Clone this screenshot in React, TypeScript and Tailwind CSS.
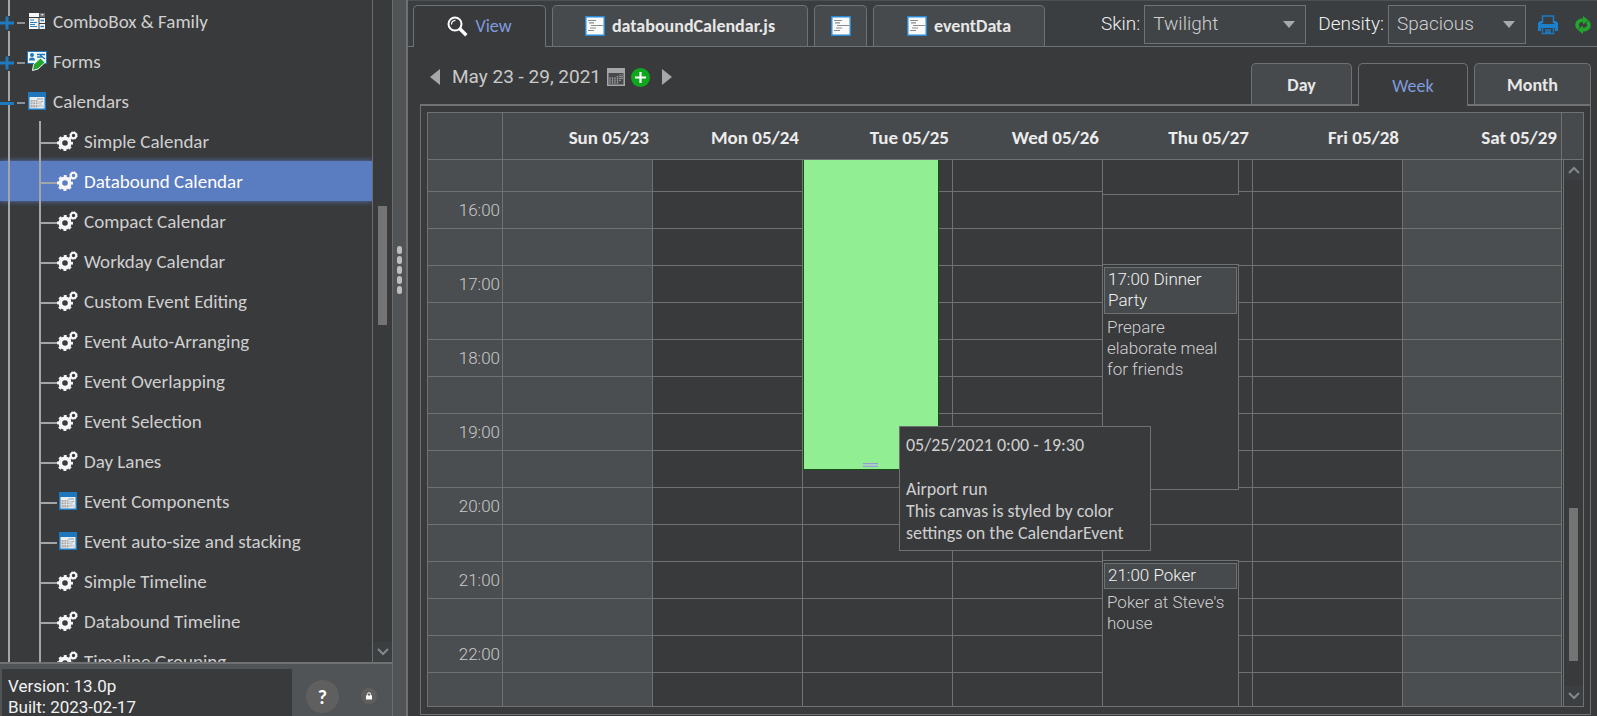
import type { ReactNode } from "react";

const ui = "font-['Carlito','Lato',sans-serif]";
const roboto = "font-['Roboto',sans-serif]";

function Gears() {
  return (
    <svg width="21" height="21" viewBox="0 0 21 21" className="shrink-0" aria-hidden="true">
      <g fill="none" stroke="#f6f6f6">
        <circle cx="8" cy="12" r="4.700" strokeWidth="3.800" />
        <circle cx="8" cy="12" r="7" strokeWidth="2" strokeDasharray="3 2.500" strokeDashoffset="1.500" />
        <circle cx="16.500" cy="4.500" r="2.700" strokeWidth="2" />
        <circle cx="16.500" cy="4.500" r="3.800" strokeWidth="0.800" strokeDasharray="1.500 1.480" />
      </g>
    </svg>
  );
}

function CalendarIcon() {
  return (
    <svg width="18" height="18" viewBox="0 0 18 18" className="shrink-0" aria-hidden="true">
      <rect width="18" height="18" fill="#1f78bd" />
      <rect x="1.5" y="5" width="15" height="11.5" fill="#e9eef3" />
      <rect x="2.5" y="8" width="7" height="7.5" fill="#a9a9a9" />
      <path d="M9 6.5h6v1H9zM10 9h5v1h-5zM10 11h3v1h-3z" fill="#9a9da0" />
      <path d="M9.500 9h4v6h-4z" fill="#c4c6c8" />
      <path d="M2.5 10h9M2.5 12.5h9M5 8v7.500M7.500 8v7.500M12 10v4" stroke="#f2f2f2" strokeWidth="0.6" />
      <path d="M14 13h2.500v2.500h-2.500z" fill="#bcd8f0" />
    </svg>
  );
}

function ComboIcon() {
  return (
    <svg width="18" height="18" viewBox="0 0 18 18" className="shrink-0" aria-hidden="true">
      <rect x="1" y="1" width="10" height="4" fill="#f5f5f5" />
      <rect x="11.500" y="1" width="5.500" height="4" fill="#6e7072" />
      <path d="M12.500 2h3.500l-1.750 2z" fill="#d0d0d0" />
      <rect x="1" y="6" width="9.500" height="11" fill="#f5f5f5" />
      <path d="M2 8h4M2 10.500h7M2 14.500h7M2 12.500h5" stroke="#2a7fc4" strokeWidth="1.200" />
      <rect x="11.500" y="6" width="5.500" height="5" fill="#f5f5f5" />
      <rect x="11.500" y="12" width="5.500" height="5" fill="#f5f5f5" />
      <path d="M12.500 8.500h3.500M12.500 14.500h3.500" stroke="#2a7fc4" strokeWidth="1.600" />
    </svg>
  );
}

function FormsIcon() {
  return (
    <svg width="20" height="20" viewBox="0 0 20 20" className="shrink-0" aria-hidden="true">
      <rect x="0.500" y="0.500" width="19" height="12" fill="#f4f8fb" stroke="#1f78bd" />
      <circle cx="5" cy="4" r="2" fill="#1f78bd" />
      <path d="M2 9.500q0-3 3-3t3 3z" fill="#1f78bd" />
      <path d="M10 3.500h8M10 6h5M13 4l5 4" stroke="#1f78bd" strokeWidth="1.300" />
      <path d="M5.500 19.500l1-6 7-6.500 4.500 4.500-7 6.500z" fill="#22a52c" stroke="#f4f8fb" strokeWidth="1" />
    </svg>
  );
}

function Expander({ open }: { open: boolean }) {
  return (
    <svg
      width="14"
      height={open ? 5 : 16}
      viewBox={open ? "0 0 14 5" : "0 0 14 16"}
      className="relative bg-[#393a3c]"
      aria-hidden="true"
    >
      {open ? (
        <path d="M0 2.500h14" stroke="#1d7ac0" strokeWidth="3" />
      ) : (
        <path d="M0 8h14M7 1.500v13" stroke="#1d7ac0" strokeWidth="3" />
      )}
    </svg>
  );
}

function ScriptIcon() {
  return (
    <svg width="20" height="20" viewBox="0 0 20 20" className="shrink-0" aria-hidden="true">
      <rect x="0.750" y="0.750" width="18.500" height="18.500" fill="#fafafa" stroke="#2b8ad3" strokeWidth="1.500" />
      <path d="M3 4.500h8M4 6.800h5M6 9.500h12M5 12h6M3 14.500h6" stroke="#8a8c8e" strokeWidth="1.200" />
    </svg>
  );
}

function Magnifier() {
  return (
    <svg width="21" height="21" viewBox="0 0 21 21" className="shrink-0" fill="none" aria-hidden="true">
      <circle cx="8" cy="8" r="6.500" stroke="#fff" strokeWidth="2" />
      <path d="M4.500 8.500q0-4 4-4.200" stroke="#fff" strokeWidth="1.200" />
      <path d="M12.800 12.800l6.500 6.500" stroke="#fff" strokeWidth="3.400" />
    </svg>
  );
}

const branches = [
  { label: "ComboBox & Family", icon: <ComboIcon />, open: false },
  { label: "Forms", icon: <FormsIcon />, open: false },
  { label: "Calendars", icon: <CalendarIcon />, open: true },
];

const leaves = [
  { label: "Simple Calendar" },
  { label: "Databound Calendar", selected: true },
  { label: "Compact Calendar" },
  { label: "Workday Calendar" },
  { label: "Custom Event Editing" },
  { label: "Event Auto-Arranging" },
  { label: "Event Overlapping" },
  { label: "Event Selection" },
  { label: "Day Lanes" },
  { label: "Event Components", calendar: true },
  { label: "Event auto-size and stacking", calendar: true },
  { label: "Simple Timeline" },
  { label: "Databound Timeline" },
  { label: "Timeline Grouping" },
];

function Chevron({ up }: { up?: boolean }) {
  return (
    <svg width="12" height="8" viewBox="0 0 12 8" fill="none" aria-hidden="true">
      <path d={up ? "M1 7l5-5 5 5" : "M1 1l5 5 5-5"} stroke="#85888a" strokeWidth="2" />
    </svg>
  );
}

function Sidebar() {
  return (
    <aside className="flex w-[393px] shrink-0 flex-col border-r border-[#6b6d6f]">
      <div className="flex min-h-0 flex-1">
        <nav
          aria-label="Examples"
          className={`relative min-w-0 flex-1 overflow-hidden border-r border-[#6b6d6f] pt-px text-[19px] text-[#cfcfcf] ${ui}`}
        >
          <ul>
            {branches.map((b) => (
              <li key={b.label} className="flex h-10 items-center">
                <span className="flex w-[14px] items-center pt-1">
                  <Expander open={b.open} />
                </span>
                <span className="mr-[2px] ml-[3px] mt-1 h-[2px] w-[8px] bg-[#8d8f90]" />
                <span className="flex w-[20px] justify-center">{b.icon}</span>
                <a href="#" className="ml-[6px] pt-[2px]">
                  {b.label}
                </a>
              </li>
            ))}
          </ul>
          <ul>
            {leaves.map((l) => (
              <li
                key={l.label}
                className={
                  l.selected
                    ? "flex h-10 items-center bg-[#5a7cc0] pl-[39px] text-white shadow-[0_0_5px_#5a7cc0]"
                    : "flex h-10 items-center pl-[39px]"
                }
              >
                <span className="relative z-10 h-full w-[2px] bg-[#a3a5a7]" />
                <span className="mt-1 h-[2px] w-[16px] bg-[#a3a5a7]" />
                <span className="flex w-[21px] justify-center">{l.calendar ? <CalendarIcon /> : <Gears />}</span>
                <a href="#" className="ml-[6px] pt-[2px] whitespace-nowrap">
                  {l.label}
                </a>
              </li>
            ))}
          </ul>
          <span className="absolute top-0 left-[8px] -z-0 h-full w-[2px] bg-[#a3a5a7] [clip-path:polygon(0_0,100%_0,100%_16px,0_16px,0_31px,100%_31px,100%_56px,0_56px,0_71px,100%_71px,100%_101px,0_101px,0_105px,100%_105px,100%_100%,0_100%)]" />
        </nav>
        <div className="flex w-[19px] shrink-0 flex-col items-center">
          <div className="mt-[206px] h-[119px] w-[9px] bg-[#747474]" />
          <button aria-label="Scroll down" className="mt-auto flex h-[20px] w-full items-center justify-center bg-[#3b3f41]">
            <Chevron />
          </button>
        </div>
      </div>
      <footer className="flex h-[54px] shrink-0 overflow-hidden border-t-2 border-[#6f7173] bg-[#505457]">
        <p className={`mt-[5px] ml-[2px] w-[290px] bg-[#393a3c] pt-[7px] pl-[6px] text-[17px] leading-[21px] text-[#f2f2f2] ${roboto}`}>
          Version: 13.0p
          <br />
          Built: 2023-02-17
        </p>
        <button
          aria-label="Help"
          className={`mt-4 ml-[14px] h-[33px] w-[33px] shrink-0 rounded-full bg-[#5f5f5f] text-[20px] font-bold text-white ${ui}`}
        >
          ?
        </button>
        <button
          aria-label="Lock"
          className="mt-6 ml-[22px] flex h-4 w-4 shrink-0 items-center justify-center rounded-full bg-[#5f5f5f]"
        >
          <svg width="8" height="8" viewBox="0 0 8 8" aria-hidden="true">
            <rect x="1" y="3.500" width="6" height="4" fill="#fff" />
            <path d="M2.300 4V2.500a1.700 1.700 0 013.400 0V4" fill="none" stroke="#fff" strokeWidth="1" />
          </svg>
        </button>
      </footer>
    </aside>
  );
}

function Splitter() {
  return (
    <div className="relative w-[15px] shrink-0 border-r-2 border-[#6f7173] bg-[#505457]">
      <div className="absolute top-[246px] left-[4px] flex flex-col gap-[2px]">
        {[0, 1, 2, 3, 4].map((n) => (
          <span key={n} className="h-[8px] w-[5px] rounded-full bg-[#bdbdbd]" />
        ))}
      </div>
    </div>
  );
}

function FileTab({ className, active, children, label }: { className: string; active?: boolean; children?: ReactNode; label?: string }) {
  return (
    <button
      role="tab"
      aria-selected={!!active}
      aria-label={label}
      className={`flex items-center justify-center gap-[7px] rounded-t-[5px] border border-b-0 border-[#6f7173] text-[18px] ${ui} ${
        active ? "-mb-px h-[42px] bg-[#393a3c] text-[#7f9bdc]" : "h-[41px] bg-[#474a4c] font-semibold text-[#e8e8e8]"
      } ${className}`}
    >
      {children}
    </button>
  );
}

function Picker({ id, label, value, options, className }: { id: string; label: string; value: string; options: string[]; className: string }) {
  return (
    <>
      <label htmlFor={id} className="text-[19px] font-light text-[#f0f0f0]">
        {label}:
      </label>
      <span className={`relative ml-[4px] flex ${className}`}>
        <select
          id={id}
          defaultValue={value}
          className="h-[39px] w-full appearance-none border border-[#6f7173] bg-[#414446] pl-2 text-[19px] font-light text-[#d0d0d0]"
        >
          {options.map((o) => (
            <option key={o}>{o}</option>
          ))}
        </select>
        <svg width="12" height="7" viewBox="0 0 12 7" className="pointer-events-none absolute top-4 right-[11px]" aria-hidden="true">
          <path d="M0 0h12l-6 7z" fill="#a9a9a9" />
        </svg>
      </span>
    </>
  );
}

function TopBar() {
  return (
    <header className="flex h-[46px] shrink-0 items-end border-b border-[#6f7173] bg-[#3a3e40] pl-[5px]">
      <div role="tablist" className="flex items-end gap-[6px]">
        <FileTab active className="w-[133px]">
          <Magnifier />
          View
        </FileTab>
        <FileTab className="w-[256px]">
          <ScriptIcon />
          databoundCalendar.js
        </FileTab>
        <FileTab className="w-[53px]" label="Source">
          <ScriptIcon />
        </FileTab>
        <FileTab className="w-[172px]">
          <ScriptIcon />
          eventData
        </FileTab>
      </div>
      <div className={`mb-[2px] ml-auto flex items-center pr-[5px] ${roboto}`}>
        <Picker id="skin" label="Skin" value="Twilight" options={["Twilight", "Tahoe", "Stratus"]} className="mr-[12px] w-[162px]" />
        <Picker id="density" label="Density" value="Spacious" options={["Spacious", "Medium", "Compact"]} className="w-[138px]" />
        <button aria-label="Print" className="ml-[12px]">
          <svg width="20" height="20" viewBox="0 0 20 20" className="block" aria-hidden="true">
            <path d="M4.500 8V1h11v7" fill="none" stroke="#1f78bd" strokeWidth="1.600" />
            <path d="M2 6h2v3h12V6h2l2 2v8h-3v-3H3v3H0V8z" fill="#1b7fcb" />
            <path d="M4.500 13v5.500h11V13M7 15h6M7 17h6" fill="none" stroke="#1f78bd" strokeWidth="1.400" />
          </svg>
        </button>
        <button aria-label="Refresh" className="ml-[16px]">
          <svg width="18" height="18" viewBox="0 0 18 18" className="block" fill="none" aria-hidden="true">
            <path d="M4.600 12.200C2 9.500 2.500 4.500 8.500 4.200H10M13.400 5.800C16 8.500 15.500 13.500 9.500 13.800H8" stroke="#22a52c" strokeWidth="3.600" />
            <path d="M9 0l5.500 4.200L9 8.400zM9 9.600l-5.500 4.200L9 18z" fill="#22a52c" />
          </svg>
        </button>
      </div>
    </header>
  );
}

function DateNav() {
  return (
    <div className={`flex items-center self-start pt-[17px] pl-[22px] ${roboto}`}>
      <button aria-label="Previous week">
        <svg width="10" height="16" viewBox="0 0 10 16" className="block" aria-hidden="true">
          <path d="M10 0v16L0 8z" fill="#a8a8a8" />
        </svg>
      </button>
      <h1 className="ml-[12px] text-[19px] leading-[26px] text-[#c9c9c9]">May 23 - 29, 2021</h1>
      <button aria-label="Pick a date" className="ml-[6px]">
        <svg width="18" height="18" viewBox="0 0 18 18" className="block" aria-hidden="true">
          <rect width="18" height="18" fill="#a6a6a6" />
          <rect x="1.500" y="5" width="15" height="11.500" fill="#47494b" />
          <path d="M3 15.500V9M5.500 15.500V9M8 15.500V9M10.500 15.500V8M13 13V6.500M15 11V6.500" stroke="#b5b5b5" strokeWidth="1.300" strokeDasharray="1.300 0.700" />
        </svg>
      </button>
      <button aria-label="Add event" className="ml-[6px]">
        <svg width="19" height="19" viewBox="0 0 19 19" className="block" aria-hidden="true">
          <circle cx="9.500" cy="9.500" r="9.500" fill="#0fa81c" />
          <path d="M9.500 4v11M4 9.500h11" stroke="#fff" strokeWidth="2.200" />
        </svg>
      </button>
      <button aria-label="Next week" className="ml-[12px]">
        <svg width="10" height="16" viewBox="0 0 10 16" className="block" aria-hidden="true">
          <path d="M0 0v16l10-8z" fill="#a8a8a8" />
        </svg>
      </button>
    </div>
  );
}

function ViewTab({ label, active, className }: { label: string; active?: boolean; className: string }) {
  return (
    <button
      role="tab"
      aria-selected={!!active}
      className={`rounded-t-[5px] border border-b-0 border-[#6f7173] pt-[2px] text-[18px] ${ui} ${
        active ? "-mb-[2px] h-[43px] bg-[#393a3c] text-[#7f9bdc]" : "h-[41px] bg-[#474a4c] font-bold text-[#e8e8e8]"
      } ${className}`}
    >
      {label}
    </button>
  );
}

const days = ["Sun 05/23", "Mon 05/24", "Tue 05/25", "Wed 05/26", "Thu 05/27", "Fri 05/28", "Sat 05/29"];
const slots = ["15:30", "16:00", "16:30", "17:00", "17:30", "18:00", "18:30", "19:00", "19:30", "20:00", "20:30", "21:00", "21:30", "22:00", "22:30"];

function EventCard({ title, text, className }: { title?: string; text?: string; className: string }) {
  return (
    <div className={`absolute -left-px z-10 w-[92%] border border-[#6f7173] bg-[#393a3c] p-px text-left text-[17px] leading-[21px] font-light ${roboto} ${className}`}>
      {title && (
        <h2 className="mt-px border border-[#6f7173] bg-[#474a4c] px-[3px] pt-px pb-[2px] text-[#f2f2f2]">{title}</h2>
      )}
      {text && <p className="px-[3px] pt-[3px] text-[#cfcfcf]">{text}</p>}
    </div>
  );
}

function eventFor(day: number, slot: string) {
  if (day === 2 && slot === "15:30") {
    return (
      <div className="absolute top-0 left-0 z-10 flex h-[310px] w-[91%] items-end justify-center border border-t-0 border-[#145214] bg-[#92ee92]">
        <span className="mb-[2px] h-[4px] w-[15px] border-y border-[#8f9fd0] bg-[#a9cfc4]" />
      </div>
    );
  }
  if (day !== 4) return null;
  if (slot === "15:30") return <EventCard className="top-0 h-[35px] border-t-0" />;
  if (slot === "17:00")
    return <EventCard className="-top-[2px] h-[226px]" title="17:00 Dinner Party" text="Prepare elaborate meal for friends" />;
  if (slot === "21:00") return <EventCard className="-top-[2px] h-[148px]" title="21:00 Poker" text="Poker at Steve's house" />;
  return null;
}

function WeekGrid() {
  return (
    <div className="relative flex min-h-0 flex-1 border border-[#6f7173]">
      <div className="min-w-0 flex-1 overflow-hidden">
        <table className="w-full table-fixed border-separate border-spacing-0">
          <colgroup>
            <col className="w-[75px]" />
            {days.map((d) => (
              <col key={d} className={d.startsWith("Sat") ? "w-[159px]" : ""} />
            ))}
          </colgroup>
          <thead>
            <tr className="h-[47px] bg-[#474a4c]">
              <th className="border-r border-b border-[#6f7173]" />
              {days.map((d) => (
                <th
                  key={d}
                  scope="col"
                  className={`border-b border-[#6f7173] pt-1 pr-1 text-right text-[19px] leading-6 font-bold text-[#ececec] last:border-r ${ui}`}
                >
                  {d}
                </th>
              ))}
            </tr>
          </thead>
          <tbody>
            {slots.map((s, i) => (
              <tr key={s} className={i === 0 ? "h-[32px]" : "h-[37px]"}>
                <th
                  scope="row"
                  className={`border-r border-b border-[#6f7173] bg-[#4b4e50] p-0 pr-[2px] text-right align-middle text-[17px] leading-5 font-light text-[#c9c9c9] ${roboto}`}
                >
                  {s.endsWith(":00") ? s : ""}
                </th>
                {days.map((d, n) => (
                  <td
                    key={d}
                    className={`relative border-r border-b border-[#6f7173] p-0 ${n === 0 || n === 6 ? "bg-[#4b4e50]" : ""}`}
                  >
                    {eventFor(n, s)}
                  </td>
                ))}
              </tr>
            ))}
          </tbody>
        </table>
      </div>
      <div className="flex w-[21px] shrink-0 flex-col items-center">
        <div className="h-[47px] w-full border-b border-[#6f7173] bg-[#474a4c]" />
        <div className="ml-[1px] flex w-[20px] flex-1 flex-col items-center border-l border-[#6f7173]">
          <button aria-label="Scroll up" className="flex h-[20px] w-full items-center justify-center bg-[#3b3f41]">
            <Chevron up />
          </button>
          <div className="mt-auto h-[153px] w-[9px] bg-[#747474]" />
          <button aria-label="Scroll down" className="mt-[25px] flex h-[20px] w-full items-center justify-center bg-[#3b3f41]">
            <Chevron />
          </button>
        </div>
      </div>
      <div
        role="tooltip"
        className={`absolute top-[313px] left-[471px] z-20 w-[252px] border border-[#6f7173] bg-[#393a3c] px-[6px] pt-[7px] pb-[6px] text-[18px] leading-[22px] text-[#cfcfcf] ${ui}`}
      >
        <p className="mb-[22px]">05/25/2021 0:00 - 19:30</p>
        <p>Airport run</p>
        <p>This canvas is styled by color settings on the CalendarEvent</p>
      </div>
    </div>
  );
}

export default function App() {
  return (
    <div className="flex h-screen overflow-hidden bg-[#393a3c]">
      <Sidebar />
      <Splitter />
      <main className="flex min-w-0 flex-1 flex-col border-t border-[#4c5052]">
        <TopBar />
        <div className="flex items-end justify-between pt-4">
          <div className="-mt-4 self-start">
            <DateNav />
          </div>
          <div role="tablist" className="z-10 flex items-end gap-[6px] pr-[6px]">
            <ViewTab label="Day" className="w-[101px]" />
            <ViewTab label="Week" active className="w-[110px]" />
            <ViewTab label="Month" className="w-[117px]" />
          </div>
        </div>
        <section className="mr-[6px] mb-px ml-[12px] flex min-h-0 flex-1 flex-col border border-t-2 border-[#6f7173] px-[6px] pt-[6px] pb-[7px]">
          <WeekGrid />
        </section>
      </main>
    </div>
  );
}
